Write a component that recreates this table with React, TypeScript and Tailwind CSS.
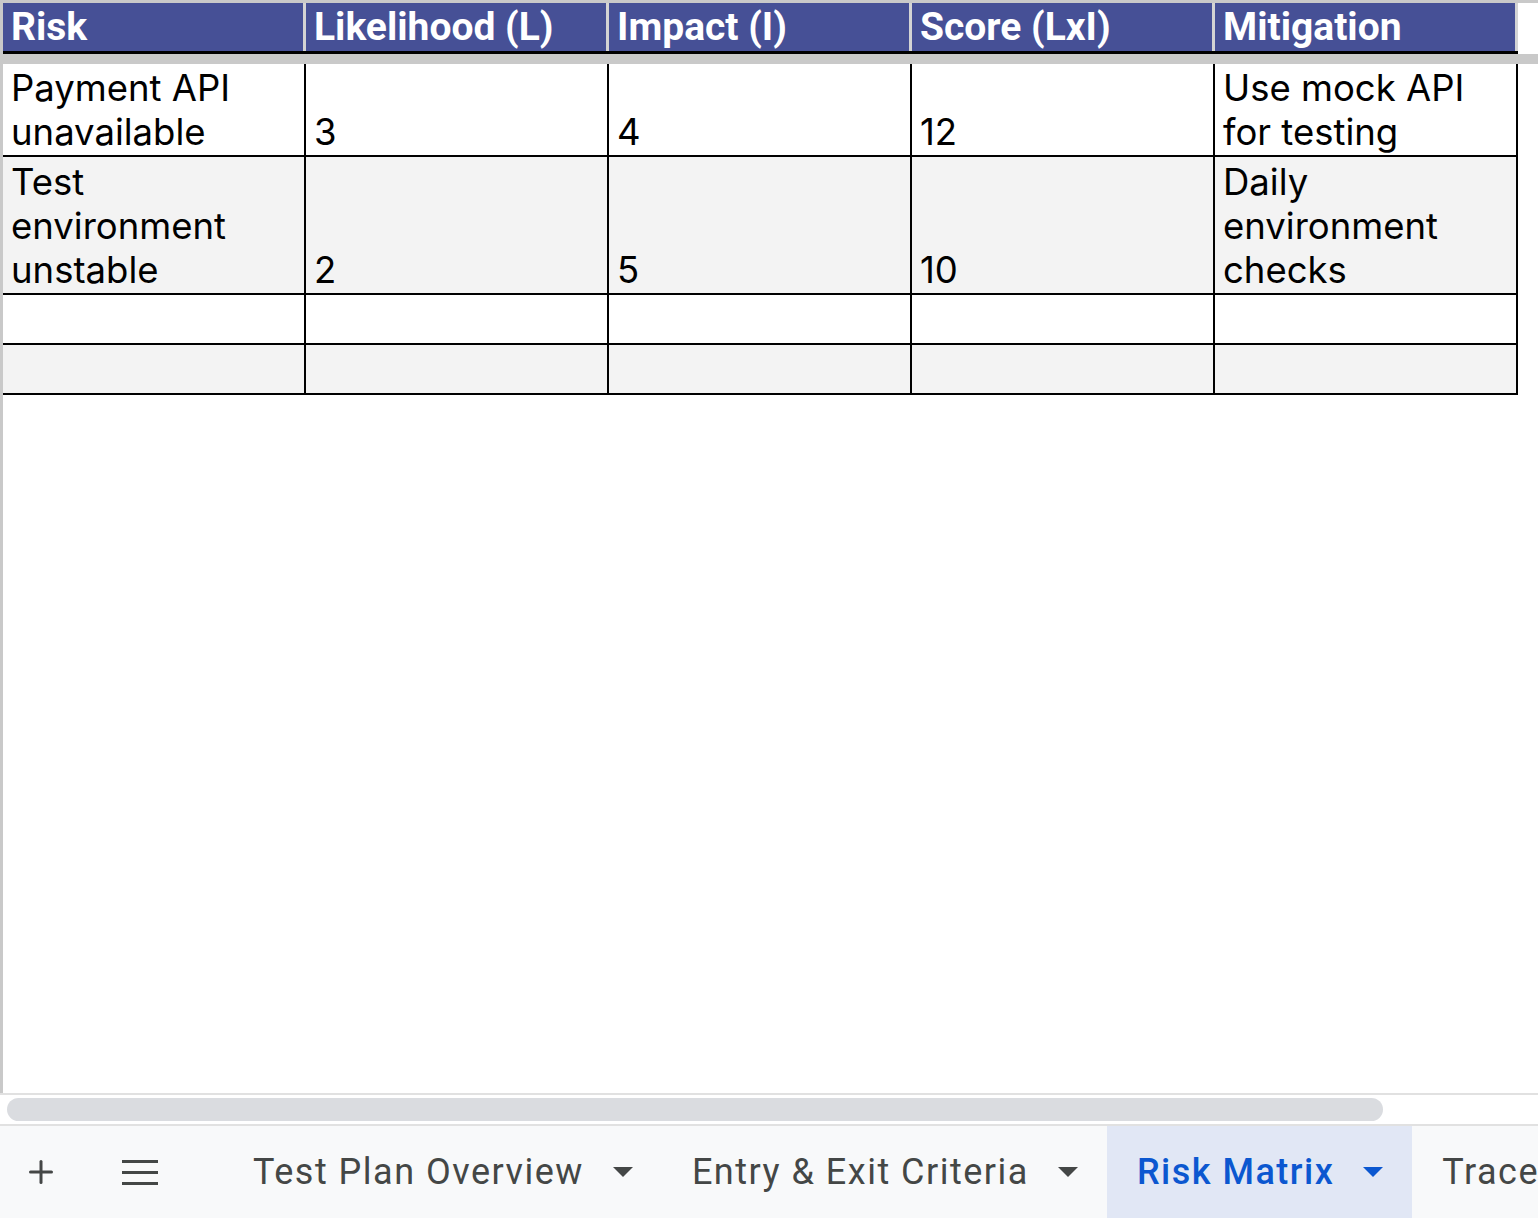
import { Plus } from 'lucide-react'

const columns = ['Risk', 'Likelihood (L)', 'Impact (I)', 'Score (LxI)', 'Mitigation']

const rows = [
  { cells: ['Payment API unavailable', '3', '4', '12', 'Use mock API for testing'], h: 'h-[93px]', alt: false },
  { cells: ['Test environment unstable', '2', '5', '10', 'Daily environment checks'], h: 'h-[138px]', alt: true },
  { cells: ['', '', '', '', ''], h: 'h-[50px]', alt: false },
  { cells: ['', '', '', '', ''], h: 'h-[50px]', alt: true },
]

const tabs = [
  { name: 'Test Plan Overview', active: false },
  { name: 'Entry & Exit Criteria', active: false },
  { name: 'Risk Matrix', active: true },
]

function Caret({ active }: { active?: boolean }) {
  return (
    <svg width="20" height="10" viewBox="0 0 20 10" className={`shrink-0 ${active ? 'text-[#0b57d0]' : 'text-[#444746]'}`}>
      <path d="M0 0 L20 0 L10 10 Z" fill="currentColor" />
    </svg>
  )
}

export default function App() {
  return (
    <div className="w-[1538px] h-[1218px] flex flex-col bg-white overflow-hidden font-['Inter',sans-serif] text-black">
      {/* Sheet grid */}
      <div className="flex-1 flex flex-col border-l-[3px] border-t-[3px] border-[#c9c9c9] min-h-0">
        {/* Frozen header */}
        <div className="flex">
          <div className="flex border-b-[3px] border-black">
            {columns.map((col) => (
              <div
                key={col}
                className="w-[303px] h-[48px] bg-[#465096] border-r-[3px] border-[#d4d4d4] flex items-end pl-2 pb-[4px] text-white font-['Roboto',sans-serif] font-bold text-[39px] leading-none"
              >
                {col}
              </div>
            ))}
          </div>
        </div>
        <div className="h-[10px] bg-[#c9c9c9] -ml-[3px]" />

        {/* Body rows */}
        <div className="flex flex-col">
          {rows.map((row, i) => (
            <div key={i} className={`flex w-[1515px] border-b-[2px] border-black ${row.h} ${row.alt ? 'bg-[#f3f3f3]' : 'bg-white'}`}>
              {row.cells.map((cell, j) => (
                <div key={j} className="w-[303px] border-r-[2px] border-black flex items-end pl-2 pb-[1px] text-[36.5px] leading-[44px]">
                  <span className="block w-[285px]">{cell}</span>
                </div>
              ))}
            </div>
          ))}
        </div>
      </div>

      {/* Horizontal scrollbar */}
      <div className="h-[33px] border-t-[2px] border-b-[2px] border-[#e1e1e1] bg-white flex items-center pl-[7px]">
        <div className="w-[1376px] h-[23px] rounded-full bg-[#dadce0]" />
      </div>

      {/* Sheet tabs */}
      <div className="h-[92px] bg-[#f8f9fa] flex items-stretch font-['Roboto',sans-serif] text-[36px] text-[#444746] whitespace-nowrap">
        <div className="w-[82px] shrink-0 flex items-center justify-center">
          <Plus size={36} strokeWidth={2} className="text-[#444746]" />
        </div>
        <div className="w-[116px] shrink-0 flex items-center justify-center">
          <div className="flex flex-col gap-[8px]">
            <div className="w-[36px] h-[3px] bg-[#444746]" />
            <div className="w-[36px] h-[3px] bg-[#444746]" />
            <div className="w-[36px] h-[3px] bg-[#444746]" />
          </div>
        </div>
        <div className="w-[25px] shrink-0" />
        {tabs.map((tab) => (
          <div
            key={tab.name}
            className={`shrink-0 flex items-center gap-[29px] pl-[30px] pr-[29px] tracking-[1.5px] ${tab.active ? 'bg-[#e1e7f5] text-[#0b57d0] font-medium' : ''}`}
          >
            <span>{tab.name}</span>
            <Caret active={tab.active} />
          </div>
        ))}
        <div className="shrink-0 flex items-center pl-[30px] tracking-[1.5px]">Traceability Matrix</div>
      </div>
    </div>
  )
}
